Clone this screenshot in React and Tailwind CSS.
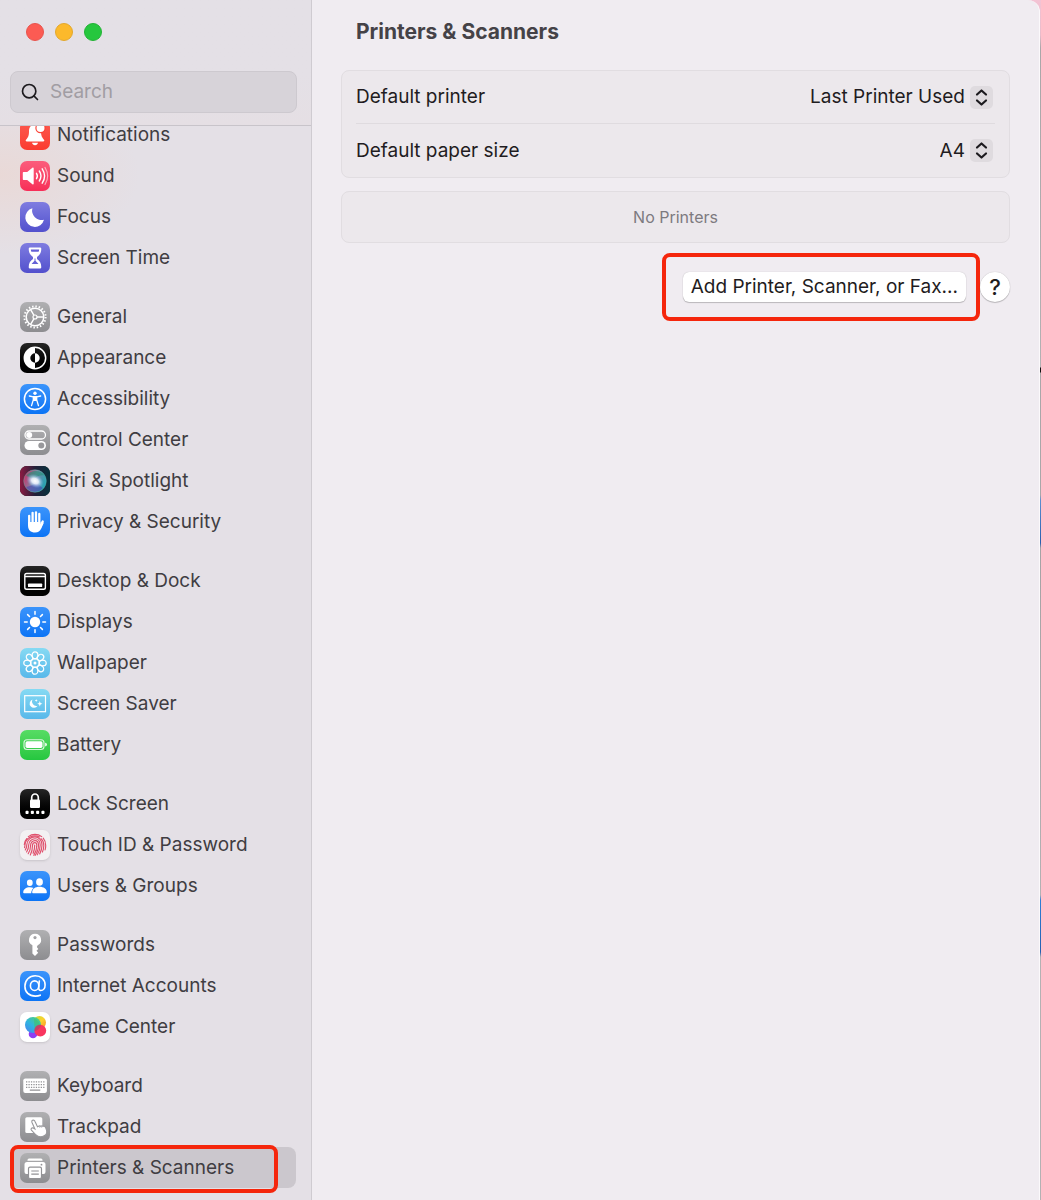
import React, { useState } from 'react';
import { Search } from 'lucide-react';

const gray = 'bg-linear-to-b from-[#b0b0b2] to-[#8d8d90]';
const blue = 'bg-linear-to-b from-[#3a94fb] to-[#0a74f5]';
const black = 'bg-linear-to-b from-[#262626] to-black';
const sky = 'bg-linear-to-b from-[#86daf3] to-[#58b8ea]';
const indigo = 'bg-linear-to-b from-[#7f7ce0] to-[#5350cd]';

function Glyph({ children }) {
  return (
    <svg viewBox="0 0 30 30" className="size-full" fill="#fff" aria-hidden="true">
      {children}
    </svg>
  );
}

const BellIcon = () => (
  <Glyph>
    <path d="M15 4.5c-4.2 0-6 3-6 6.600 0 5-1 6.500-3 8.700-.7.9-.2 1.700.8 1.700h16.400c1 0 1.500-.8.8-1.700-2-2.200-3-3.700-3-8.700 0-3.600-1.800-6.600-6-6.600z" />
    <path d="M12 22.800h6c-.3 1.500-1.500 2.400-3 2.400s-2.700-.9-3-2.400z" />
    <circle cx="20.500" cy="8" r="5.200" fill="#fb4438" />
    <circle cx="20.500" cy="8" r="4" />
  </Glyph>
);

const SoundIcon = () => (
  <Glyph>
    <path d="M3.800 11h3.400l5.200-4.300c.6-.5 1.300-.2 1.300.6v15.400c0 .8-.7 1.100-1.300.6L7.200 19H3.800c-.6 0-1-.4-1-1v-6c0-.6.4-1 1-1z" />
    <path d="M16.500 12.300a5 5 0 0 1 0 5.400M19.300 10a9 9 0 0 1 0 10M22.200 7.800a13 13 0 0 1 0 14.400" fill="none" stroke="#fff" strokeWidth="1.400" strokeLinecap="round" />
    <path d="M25 6.500a16 16 0 0 1 0 17" fill="none" stroke="#fff" strokeOpacity=".55" strokeWidth="1.200" strokeLinecap="round" />
  </Glyph>
);

const MoonIcon = () => (
  <Glyph>
    <path d="M12.400 6.200A9.500 9.500 0 1 0 24 17.800 9.500 9.500 0 0 1 12.400 6.200z" strokeLinejoin="round" />
  </Glyph>
);

const HourglassIcon = () => (
  <Glyph>
    <path d="M10 4.500h10a1.300 1.300 0 0 1 1.300 1.300c0 4-1.500 6.200-4.300 8.200v2c2.800 2 4.300 4.200 4.300 8.200A1.300 1.300 0 0 1 20 25.500H10a1.300 1.300 0 0 1-1.300-1.300c0-4 1.500-6.200 4.300-8.200v-2c-2.800-2-4.300-4.200-4.300-8.200A1.300 1.300 0 0 1 10 4.500z" />
    <path d="M14.500 15.500h1v2.300l3 3.200H11.500l3-3.200zM10.800 6.600h8.400c-.1.900-.3 1.500-.6 2.100h-7.200c-.3-.6-.5-1.200-.6-2.100z" fill="#6461d6" />
  </Glyph>
);

const GearIcon = () => (
  <Glyph>
    <g fill="none" stroke="#fff">
      <circle cx="15" cy="15" r="8.800" strokeWidth="1.500" />
      <circle cx="15" cy="15" r="10.600" strokeWidth="2" strokeDasharray="1.500 1.832" />
      <circle cx="15" cy="15" r="2" strokeWidth="1.200" />
      <path d="M17 15h7M14 13.300l-3.500-6M14 16.700l-3.500 6" strokeWidth="1.400" />
    </g>
  </Glyph>
);

const AppearanceIcon = () => (
  <Glyph>
    <circle cx="15" cy="15" r="10.700" fill="none" stroke="#fff" strokeWidth="1.500" />
    <path d="M15 4.300a10.700 10.700 0 0 0 0 21.400v-6a4.700 4.700 0 0 1 0-9.400zM15 10.300a4.700 4.700 0 0 1 0 9.400z" />
  </Glyph>
);

const AccessibilityIcon = () => (
  <Glyph>
    <circle cx="15" cy="15" r="10.600" fill="none" stroke="#fff" strokeWidth="1.500" />
    <circle cx="15" cy="9.300" r="1.700" />
    <path d="M9.300 12l4 .9v3l-1.800 5.800M20.700 12l-4 .9v3l1.800 5.800" fill="none" stroke="#fff" strokeWidth="1.300" strokeLinecap="round" strokeLinejoin="round" />
    <path d="M13 12h4v5h-4z" />
  </Glyph>
);

const ControlIcon = () => (
  <Glyph>
    <rect x="5" y="6" width="20.500" height="8" rx="4" fill="none" stroke="#fff" strokeWidth="1.300" />
    <circle cx="9.200" cy="10" r="3" />
    <rect x="4.500" y="16" width="21.500" height="9" rx="4.500" />
    <circle cx="21.300" cy="20.500" r="3" fill="#98989b" />
  </Glyph>
);

const SiriIcon = () => (
  <Glyph>
    <defs>
      <linearGradient id="siri-back" x1="0" y1="0" x2="1" y2="0">
        <stop offset="0" stopColor="#8c1a42" />
        <stop offset=".5" stopColor="#231f38" />
        <stop offset="1" stopColor="#06323e" />
      </linearGradient>
      <linearGradient id="siri-orb" x1="0" y1=".3" x2="1" y2=".7">
        <stop offset="0" stopColor="#cc3068" />
        <stop offset=".45" stopColor="#7c8aa8" />
        <stop offset="1" stopColor="#1aa6b4" />
      </linearGradient>
      <radialGradient id="siri-glow">
        <stop offset="0" stopColor="#fff" />
        <stop offset=".4" stopColor="#eef4ff" stopOpacity=".9" />
        <stop offset="1" stopColor="#7fb4f0" stopOpacity="0" />
      </radialGradient>
    </defs>
    <rect width="30" height="30" fill="url(#siri-back)" />
    <circle cx="15" cy="15" r="11.300" fill="url(#siri-orb)" />
    <path d="M6 10c5-7 15-6 19-.5-7-1-10 2.500-11 5.500-3-3.500-5-4.500-8-5z" fill="#1f8f74" opacity=".6" />
    <path d="M6 21c4-1 8-2 10-5 3 2 5 5 7 6-5 6-14 5-17-1z" fill="#4a44b0" opacity=".6" />
    <ellipse cx="15" cy="15" rx="9" ry="6.500" transform="rotate(28 15 15)" fill="url(#siri-glow)" />
    <circle cx="15" cy="15" r="11.300" fill="none" stroke="#5fb9a9" strokeOpacity=".6" strokeWidth=".7" />
  </Glyph>
);

const HandIcon = () => (
  <Glyph>
    <g stroke="#fff" strokeWidth="2.300" strokeLinecap="round" fill="none">
      <path d="M9.200 8.800v9M12.600 5.800v11M16 5.300v11M19.300 7v10" />
      <path d="M22.700 14.500l-2.500 5.500" />
    </g>
    <path d="M8.050 15h12.400v2.500l1.500-2 1.900.3-2.600 5.700c-1.300 2.700-3 4.100-6.100 4.100-4.600 0-7.100-2.600-7.100-6.800z" />
  </Glyph>
);

const DockIcon = () => (
  <Glyph>
    <rect x="4.800" y="7.500" width="20.600" height="15.800" rx="1.800" fill="none" stroke="#fff" strokeWidth="1.400" />
    <path d="M5 10.500h20" stroke="#fff" strokeWidth="1.400" />
    <rect x="8" y="17.500" width="14.200" height="3.600" rx=".7" />
  </Glyph>
);

const SunIcon = () => (
  <Glyph>
    <circle cx="15" cy="15" r="5.200" />
    <path d="M15 4.500v2.700M15 22.800v2.700M4.500 15h2.700M22.800 15h2.700M7.600 7.600l1.900 1.900M20.500 20.500l1.900 1.900M7.600 22.400l1.900-1.900M20.500 9.500l1.900-1.900" stroke="#fff" strokeWidth="1.500" strokeLinecap="round" />
  </Glyph>
);

const FlowerIcon = () => (
  <Glyph>
    <g fill="none" stroke="#fff" strokeWidth="1.300">
      {[0, 45, 90, 135, 180, 225, 270, 315].map((deg) => (
        <ellipse key={deg} cx="15" cy="7.300" rx="2.900" ry="3.500" transform={`rotate(${deg} 15 15)`} />
      ))}
      <circle cx="15" cy="15" r="4.300" />
    </g>
    <circle cx="15" cy="15" r="1.500" />
  </Glyph>
);

const ScreenSaverIcon = () => (
  <Glyph>
    <rect x="4.700" y="6.700" width="20.800" height="16" fill="none" stroke="#fff" strokeWidth="1.200" />
    <path d="M12.400 10.500a4.300 4.300 0 1 0 5.200 6.300 4.500 4.500 0 0 1-5.200-6.300z" />
    <path d="M19.800 12l.7 2 1.900.7-1.900.7-.7 2-.7-2-1.900-.7 1.900-.7zM16.200 10l.4 1.100 1.100.4-1.100.4-.4 1.100-.4-1.100-1.100-.4 1.100-.4z" />
  </Glyph>
);

const BatteryIcon = () => (
  <Glyph>
    <rect x="4" y="9.700" width="20" height="9.800" rx="3" fill="none" stroke="#fff" strokeOpacity=".8" strokeWidth="1.100" />
    <rect x="5.500" y="11.200" width="17" height="6.800" rx="1.700" />
    <path d="M25.200 12.700c1.200.4 1.700 1 1.700 1.900s-.5 1.500-1.700 1.900z" />
  </Glyph>
);

const LockIcon = () => (
  <Glyph>
    <path d="M11.700 11V8.500a3.300 3.500 0 0 1 6.600 0V11" fill="none" stroke="#fff" strokeWidth="1.700" />
    <rect x="10" y="10.500" width="10" height="8.500" rx="1.300" />
    <rect x="5.500" y="21.800" width="3.100" height="3.100" rx=".9" />
    <rect x="10.800" y="21.800" width="3.100" height="3.100" rx=".9" />
    <rect x="16.100" y="21.800" width="3.100" height="3.100" rx=".9" />
    <rect x="21.400" y="21.800" width="3.100" height="3.100" rx=".9" />
  </Glyph>
);

const FingerprintIcon = () => (
  <Glyph>
    <g fill="none" stroke="#e0506c" strokeWidth="1.150" strokeLinecap="round">
      <path d="M8.300 6.600a11 11 0 0 1 13.400 0" />
      <path d="M4.300 14.500a10.800 10.800 0 0 1 2.600-6M23.200 8.200a10.800 10.800 0 0 1 2.500 7.300c0 1.600-.2 3-.6 4.400" />
      <path d="M4.500 17.600c.4-.9.500-1.900.5-3a10 10 0 0 1 14.500-7.600" />
      <path d="M21 8.700a8.800 8.800 0 0 1 2.800 6.700c0 2.400-.4 4.500-1.400 6.700" />
      <path d="M5.300 20c1-1.700 1.500-3.400 1.500-5.300A8.200 8.200 0 0 1 15 6.800c3.800 0 7 3.300 7 8.200 0 3.300-.8 6.200-2.300 8.900" />
      <path d="M6.600 22c1.400-2.200 2.100-4.500 2.100-7A6.300 6.300 0 0 1 15 8.700c3 0 5.200 2.600 5.200 6.300 0 3.700-1 7-2.900 9.800" />
      <path d="M8.200 23.700c1.600-2.600 2.400-5.400 2.400-8.500a4.500 4.500 0 0 1 4.400-4.600c2.100 0 3.500 2 3.500 4.500 0 4-1.200 7.400-3.400 10.300" />
      <path d="M10.300 25c1.500-2.700 2.200-5.900 2.200-9.400 0-1.900 1.100-3 2.400-3s1.900 1.200 1.900 2.700c0 3.800-1.100 7.200-3 10" />
      <path d="M14.700 15c0 3-.5 5.800-1.600 8.300" />
    </g>
  </Glyph>
);

const UsersIcon = () => (
  <Glyph>
    <ellipse cx="9.800" cy="11.800" rx="2.900" ry="3.300" />
    <path d="M3.200 21.500c0-3.300 2.800-5.300 6.600-5.300 1.500 0 2.800.3 3.800.9-1.600 1.400-2.400 3.200-2.400 5.200H4c-.5 0-.8-.3-.8-.8z" />
    <ellipse cx="19.500" cy="11" rx="3.400" ry="3.800" />
    <path d="M12.200 21.300c0-3.400 3.100-5.500 7.300-5.500s7.300 2.100 7.300 5.500c0 .6-.3 1-1 1H13.200c-.7 0-1-.4-1-1z" />
  </Glyph>
);

const KeyIcon = () => (
  <Glyph>
    <path d="M15 3.800a6 6 0 0 0-2.600 11.400v8.300L15 26l3.200-3.300-1.700-1.900 1.800-1.800-1.500-1.900.9-1.900A6 6 0 0 0 15 3.800z" />
    <circle cx="15" cy="7.600" r="1.600" fill="#a4a4a7" />
  </Glyph>
);

const AtIcon = () => (
  <Glyph>
    <g fill="none" stroke="#fff" strokeWidth="1.600" strokeLinecap="round">
      <ellipse cx="14.600" cy="14.700" rx="4.200" ry="4.800" />
      <path d="M19.300 10l-.6 6.800c-.1 1.700.7 2.700 2.100 2.700 2.400 0 4.300-2.200 4.300-5.600 0-5.300-4-9.200-9.900-9.200A10.300 10.300 0 0 0 4.900 15.200c0 6 4.200 9.900 10.400 9.900 2 0 3.700-.3 5-.9" />
    </g>
  </Glyph>
);

const GameIcon = () => (
  <Glyph>
    <defs>
      <linearGradient id="ball-blue" x1="0" y1="1" x2=".8" y2="0">
        <stop offset="0" stopColor="#4b7df0" />
        <stop offset=".5" stopColor="#2fb4e0" />
        <stop offset="1" stopColor="#4cd07a" />
      </linearGradient>
      <linearGradient id="ball-yellow" x1="0" y1="0" x2="1" y2="1">
        <stop offset="0" stopColor="#b9dc3a" />
        <stop offset=".5" stopColor="#fbd22e" />
        <stop offset="1" stopColor="#fb8a2a" />
      </linearGradient>
    </defs>
    <circle cx="13" cy="22" r="4.300" fill="#8f3df2" />
    <circle cx="19.500" cy="10.500" r="6.500" fill="url(#ball-yellow)" />
    <circle cx="13" cy="13" r="8" fill="url(#ball-blue)" />
    <path d="M14 6.500c3 1 6 4 6.500 8.500-2 1-4 1-6 3z" fill="#3fc06a" opacity=".55" />
    <circle cx="20.300" cy="18.700" r="5.900" fill="#f9365f" />
    <path d="M14.500 17.500a6 6 0 0 1 6.300-4.700c.3 2.500-2.300 5.700-6.300 6.200z" fill="#a04a6e" opacity=".6" />
  </Glyph>
);

const KeyboardIcon = () => (
  <Glyph>
    <rect x="3.300" y="7.500" width="23.600" height="14.600" rx="2" />
    <g stroke="#929295" strokeWidth="1.300">
      <path d="M6 10.800h18.500M6 13.600h18.500M6 16.400h18.500" strokeDasharray="1.300 1.150" />
      <path d="M9.800 19.200h10.500" />
    </g>
  </Glyph>
);

const TrackpadIcon = () => (
  <Glyph>
    <rect x="5.300" y="5.200" width="17" height="15.800" rx="1.500" />
    <path
      d="M12.500 8.300c1-.5 2 0 2.400.9l2.600 5.500 1.600-.7c.7-.3 1.300-.1 1.800.3.700-.5 1.400-.5 2 0 1.500-.3 2.300.3 2.900 1.600 1.400 3.200 1.600 6.200-1.600 7.900-3.500 1.800-6.400 1-8.800-1.500l-4-4.200c-1-1.200.4-2.700 1.800-2l1.700.9-3-6.800c-.3-.8-.1-1.500.6-1.900z"
      stroke="#98989b"
      strokeWidth="1.100"
    />
    <path d="M19.200 14.300l.7 1.500M21.200 14.400l.6 1.300" stroke="#98989b" strokeWidth=".7" />
  </Glyph>
);

const PrinterIcon = () => (
  <Glyph>
    <path d="M9 5.500h12a1.500 1.500 0 0 1 1.500 1.500v.7h-15V7A1.500 1.500 0 0 1 9 5.500z" />
    <path d="M7 9h16a2.500 2.500 0 0 1 2.500 2.500V19a2 2 0 0 1-2 2h-17a2 2 0 0 1-2-2v-7.500A2.500 2.500 0 0 1 7 9z" />
    <circle cx="21.500" cy="11.700" r=".9" fill="#929295" />
    <rect x="8.500" y="14.200" width="13" height="11.300" rx="1.500" stroke="#929295" strokeWidth="1.200" />
    <path d="M11.300 18h7.500M11.300 21.200h7.500" stroke="#929295" strokeWidth="1.200" />
  </Glyph>
);

const groups = [
  [
    { name: 'Notifications', tile: 'bg-linear-to-b from-[#fc5a50] to-[#fb3a2e]', icon: <BellIcon /> },
    { name: 'Sound', tile: 'bg-linear-to-b from-[#fb5c7c] to-[#f72d58]', icon: <SoundIcon /> },
    { name: 'Focus', tile: indigo, icon: <MoonIcon /> },
    { name: 'Screen Time', tile: indigo, icon: <HourglassIcon /> },
  ],
  [
    { name: 'General', tile: gray, icon: <GearIcon /> },
    { name: 'Appearance', tile: black, icon: <AppearanceIcon /> },
    { name: 'Accessibility', tile: blue, icon: <AccessibilityIcon /> },
    { name: 'Control Center', tile: gray, icon: <ControlIcon /> },
    { name: 'Siri & Spotlight', tile: 'bg-black', icon: <SiriIcon /> },
    { name: 'Privacy & Security', tile: blue, icon: <HandIcon /> },
  ],
  [
    { name: 'Desktop & Dock', tile: black, icon: <DockIcon /> },
    { name: 'Displays', tile: blue, icon: <SunIcon /> },
    { name: 'Wallpaper', tile: sky, icon: <FlowerIcon /> },
    { name: 'Screen Saver', tile: sky, icon: <ScreenSaverIcon /> },
    { name: 'Battery', tile: 'bg-linear-to-b from-[#56dc64] to-[#24c73f]', icon: <BatteryIcon /> },
  ],
  [
    { name: 'Lock Screen', tile: black, icon: <LockIcon /> },
    { name: 'Touch ID & Password', tile: 'bg-[#f3f1f2] shadow-sm', icon: <FingerprintIcon /> },
    { name: 'Users & Groups', tile: blue, icon: <UsersIcon /> },
  ],
  [
    { name: 'Passwords', tile: gray, icon: <KeyIcon /> },
    { name: 'Internet Accounts', tile: blue, icon: <AtIcon /> },
    { name: 'Game Center', tile: 'bg-white shadow-sm', icon: <GameIcon /> },
  ],
  [
    { name: 'Keyboard', tile: gray, icon: <KeyboardIcon /> },
    { name: 'Trackpad', tile: gray, icon: <TrackpadIcon /> },
    { name: 'Printers & Scanners', tile: gray, icon: <PrinterIcon />, active: true },
  ],
];

function SidebarItem({ item }) {
  return (
    <li className="relative">
      <a
        href="#"
        aria-current={item.active ? 'page' : undefined}
        className={`flex h-[41px] items-center gap-[7px] rounded-lg px-[10px] leading-4 text-[#403d42] ${item.active ? 'bg-[#cbc7cd]' : ''}`}
      >
        <span className={`flex size-[30px] shrink-0 items-center justify-center overflow-hidden rounded-[7px] ${item.tile}`}>
          {item.icon}
        </span>
        {item.name}
      </a>
      {item.active && (
        <span className="pointer-events-none absolute -top-[2px] right-[18px] -bottom-[5px] left-0 rounded-lg border-4 border-[#f5260c]" />
      )}
    </li>
  );
}

function Sidebar() {
  const [query, setQuery] = useState('');

  return (
    <aside className="flex w-[312px] shrink-0 flex-col border-r border-[#cfcbd1] bg-[#e4e0e6] bg-[radial-gradient(ellipse_140px_80px_at_0px_175px,#e9d9d7,#e4e0e600)]">
      <div className="relative z-10 border-b border-[#c8c4ca] bg-linear-to-b from-[#e4e0e6] from-60% to-[#e5dfe4] pt-[23px] pr-[14px] pb-3 pl-[10px]">
        <div className="flex gap-[11px] pl-4">
          <button aria-label="Close" className="size-[18px] rounded-full border border-[#e8534c] bg-[#fc5b53]" />
          <button aria-label="Minimize" className="size-[18px] rounded-full border border-[#e3a82c] bg-[#fcb92b]" />
          <button aria-label="Zoom" className="size-[18px] rounded-full border border-[#22b335] bg-[#26c73e]" />
        </div>
        <label className="mt-[30px] flex h-[42px] items-center gap-[10px] rounded-lg border border-[#cdc9cf] bg-[#d7d3d9] px-[9px]">
          <Search className="size-5 shrink-0 text-[#1c1a1e]" strokeWidth={2} />
          <input
            type="text"
            aria-label="Search"
            placeholder="Search"
            value={query}
            onChange={(e) => setQuery(e.target.value)}
            className="w-full bg-transparent outline-none placeholder:text-[#a19da3]"
          />
        </label>
      </div>
      <nav className="-mt-3 flex flex-col gap-[18px] pr-[15px] pb-3 pl-[10px]">
        {groups.map((group) => (
          <ul key={group[0].name}>
            {group.map((item) => (
              <SidebarItem key={item.name} item={item} />
            ))}
          </ul>
        ))}
      </nav>
    </aside>
  );
}

function SelectRow({ id, label, options }) {
  return (
    <div className="flex h-[53px] items-center justify-between">
      <label htmlFor={id}>{label}</label>
      <div className="relative mr-[2px] flex items-center">
        <select id={id} className="field-sizing-content appearance-none bg-transparent pr-7 outline-none">
          {options.map((o) => (
            <option key={o}>{o}</option>
          ))}
        </select>
        <span className="pointer-events-none absolute right-0 flex size-[23px] items-center justify-center rounded-[5px] bg-[#dfdbdf]">
          <svg viewBox="0 0 23 23" className="size-full" fill="none" stroke="#1c1a1e" strokeWidth="2.200" strokeLinecap="round" strokeLinejoin="round" aria-hidden="true">
            <path d="M7 8.500l4.500-4 4.500 4M7 14.500l4.500 4 4.500-4" />
          </svg>
        </span>
      </div>
    </div>
  );
}

export default function App() {
  return (
    <div className="min-h-screen bg-[linear-gradient(#f3c3d4_0px,#e9bccb_35px,#a9a7a9_48px,#b3b1b3_367px,#111_368px,#111_372px,#a9a7a9_373px,#a9a7a9_495px,#5d8fd0_500px,#2a5fae_543px,#a5a3a5_548px,#b3b1b3_895px,#2f7fd6_900px,#2560b0_952px,#b3b1b3_957px)] pr-px font-['Inter',sans-serif] text-[19px] leading-6 text-[#1f1c21]">
      <div className="flex min-h-screen overflow-hidden rounded-tr-xl border-r border-[#fbf9fb] bg-[#f0ecf1]">
        <Sidebar />
        <main className="min-w-0 flex-1 px-[29px] pt-5">
          <h1 className="pl-[15px] text-[21px] font-bold text-[#454247]">Printers &amp; Scanners</h1>
          <section className="mt-[26px] divide-y divide-[#dfdbdf] rounded-lg border border-[#e1dde1] bg-[#ece8ec] px-[14px]">
            <SelectRow id="printer" label="Default printer" options={['Last Printer Used']} />
            <SelectRow id="paper" label="Default paper size" options={['A4', 'US Letter']} />
          </section>
          <section className="mt-[13px] flex h-[52px] items-center justify-center rounded-lg border border-[#e1dde1] bg-[#ece8ec] text-[16px] text-[#7d7a7f]">
            No Printers
          </section>
          <div className="mt-[10px] flex items-center justify-end">
            <div className="rounded-lg border-4 border-[#f5260c] py-[15px] pr-[10px] pl-[17px]">
              <button className="h-[30px] rounded-md bg-white px-2 shadow-[0_0_1px_#0004,0_1px_1px_#0003]">
                Add Printer, Scanner, or Fax...
              </button>
            </div>
            <button aria-label="Help" className="size-[30px] rounded-full bg-white text-[22px] font-medium shadow-[0_0_1px_#0004,0_1px_1px_#0003]">
              ?
            </button>
          </div>
        </main>
      </div>
    </div>
  );
}
